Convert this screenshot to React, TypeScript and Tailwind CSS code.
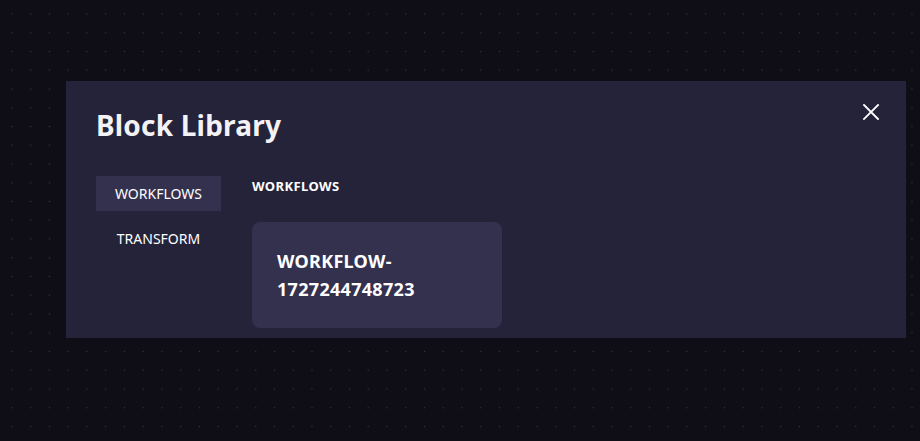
import React from "react";

export default function App() {
  return (
    <div
      className="w-[920px] h-[441px] overflow-hidden bg-[#0f0e16] bg-[radial-gradient(circle,#34323f_0.9px,transparent_1px)] bg-[length:18.75px_18.75px] bg-[position:2.6px_4.6px] pt-[81px] pl-[66px]"
      style={{ fontFamily: '"Noto Sans", "Open Sans", sans-serif' }}
    >
      <div className="relative w-[840px] h-[257px] bg-[#25233a] px-[30px] pt-[26px]">
        <button className="absolute right-[26px] top-[22px] w-[18px] h-[18px] text-white">
          <svg viewBox="0 0 18 18" width="18" height="18" fill="none" stroke="currentColor" strokeWidth="1.8" strokeLinecap="square">
            <path d="M2 2L16 16M16 2L2 16" />
          </svg>
        </button>
        <h1 className="text-[28px] leading-[36px] font-bold text-[#f3f2f7] tracking-[0.2px]">Block Library</h1>
        <div className="flex mt-[33px] gap-[31px]">
          <div className="w-[125px] flex flex-col gap-[10px]">
            <div className="h-[35px] bg-[#34314f] text-white text-[14px] flex items-center justify-center">
              WORKFLOWS
            </div>
            <div className="h-[35px] text-white text-[14px] flex items-center justify-center">
              TRANSFORM
            </div>
          </div>
          <div className="flex flex-col">
            <div className="text-[13px] font-bold text-white leading-[20px] tracking-[0.4px]">WORKFLOWS</div>
            <div className="mt-[26px] w-[250px] h-[106px] rounded-[8px] bg-[#34314f] px-[25px] pt-[25px] text-[18px] font-bold leading-[28px] text-white tracking-[0.3px]">
              WORKFLOW-
              <br />
              1727244748723
            </div>
          </div>
        </div>
      </div>
    </div>
  );
}
